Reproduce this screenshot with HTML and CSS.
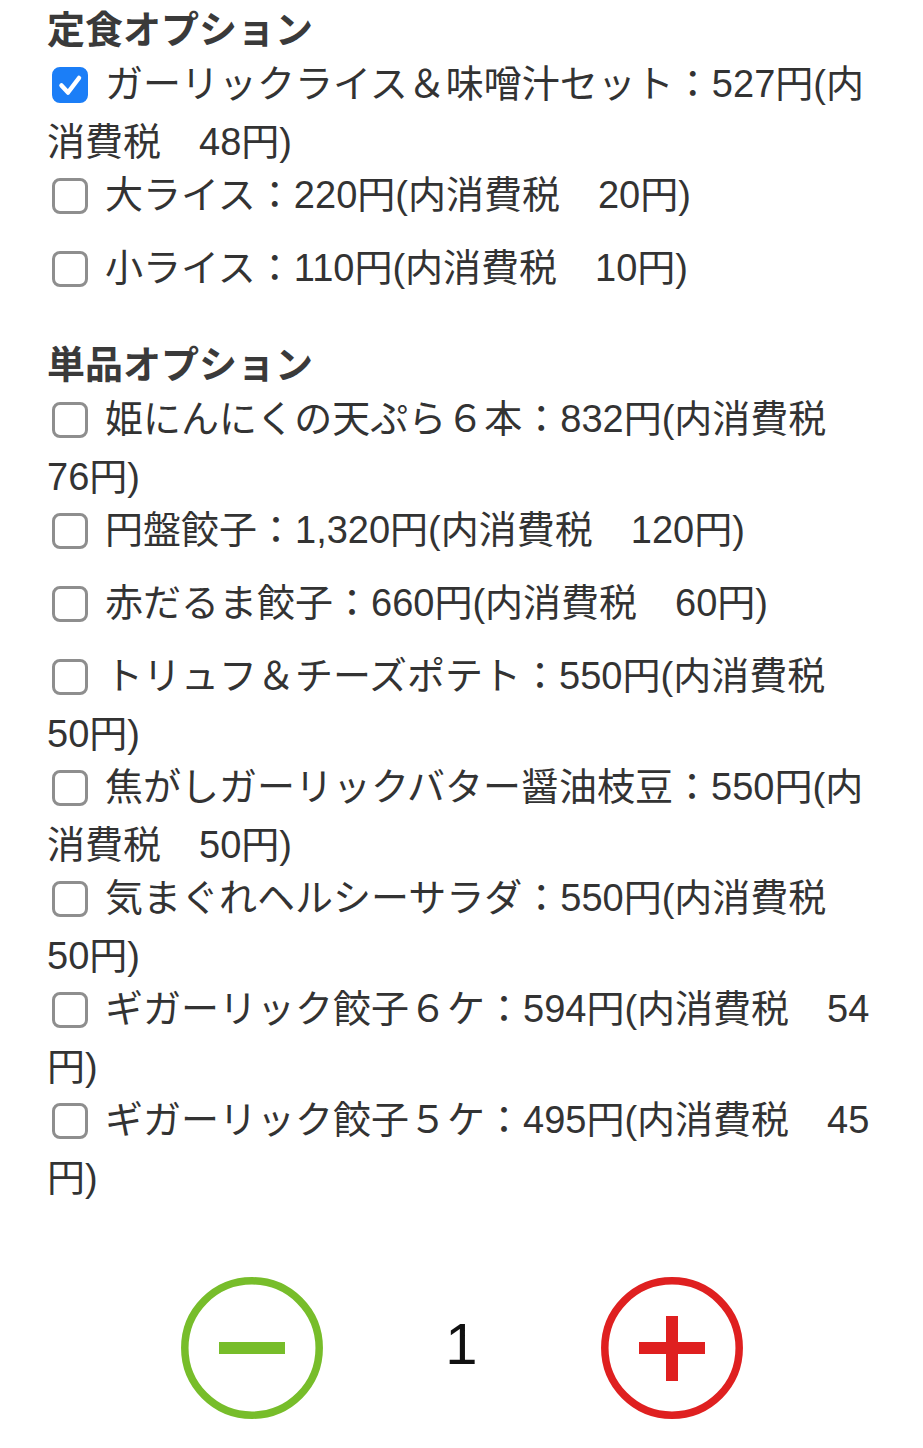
FILE: index.html
```html
<!DOCTYPE html>
<html lang="ja">
<head>
  <meta charset="utf-8">
  <meta name="viewport" content="width=device-width, initial-scale=1.0">
  <title>オプション選択</title>
  <link rel="stylesheet" href="styles.css">
</head>
<body>
  <div class="order">
    <section class="group">
      <h2 class="group-title">定食オプション</h2>
      <label class="opt"><input type="checkbox" checked><span class="box"><svg viewBox="0 0 36 36"><path d="M9.5 18.5 L16 25.5 L27 11" /></svg></span>ガーリックライス＆味噌汁セット：527円(内消費税　48円)</label>
      <label class="opt"><input type="checkbox"><span class="box"></span>大ライス：220円(内消費税　20円)</label>
      <label class="opt"><input type="checkbox"><span class="box"></span>小ライス：110円(内消費税　10円)</label>
    </section>

    <section class="group">
      <h2 class="group-title">単品オプション</h2>
      <label class="opt"><input type="checkbox"><span class="box"></span>姫にんにくの天ぷら６本：832円(内消費税　76円)</label>
      <label class="opt"><input type="checkbox"><span class="box"></span>円盤餃子：1,320円(内消費税　120円)</label>
      <label class="opt"><input type="checkbox"><span class="box"></span>赤だるま餃子：660円(内消費税　60円)</label>
      <label class="opt"><input type="checkbox"><span class="box"></span>トリュフ＆チーズポテト：550円(内消費税　50円)</label>
      <label class="opt"><input type="checkbox"><span class="box"></span>焦がしガーリックバター醤油枝豆：550円(内消費税　50円)</label>
      <label class="opt"><input type="checkbox"><span class="box"></span>気まぐれヘルシーサラダ：550円(内消費税　50円)</label>
      <label class="opt"><input type="checkbox"><span class="box"></span>ギガーリック餃子６ケ：594円(内消費税　54円)</label>
      <label class="opt"><input type="checkbox"><span class="box"></span>ギガーリック餃子５ケ：495円(内消費税　45円)</label>
    </section>

    <div class="qty">
      <button class="qty-btn minus" type="button" aria-label="減らす">
        <svg viewBox="0 0 142 142">
          <circle cx="71" cy="71" r="67.2" />
          <rect x="38" y="65" width="66" height="12" />
        </svg>
      </button>
      <div class="qty-num">1</div>
      <button class="qty-btn plus" type="button" aria-label="増やす">
        <svg viewBox="0 0 142 142">
          <circle cx="71" cy="71" r="67.2" />
          <rect x="38" y="65" width="66" height="12" />
          <rect x="65" y="39" width="12" height="65" />
        </svg>
      </button>
    </div>
  </div>
</body>
</html>
```

FILE: styles.css
```css
html, body {
  margin: 0;
  background: #fff;
}
body {
  font-family: "Liberation Sans", "Noto Sans CJK JP", sans-serif;
  color: #333;
}

.order {
  padding: 11px 47px 0;
}

/* the last row's 15px margin collapses into this one */
.group + .group {
  margin-top: 39px;
}

.group-title {
  margin: 0 0 16px;
  font-size: 38px;
  line-height: 38px;
  font-weight: bold;
  color: #3a3a3a;
}

/* one option row, wraps back under the box */
.opt {
  display: block;
  margin-bottom: 15px;
  font-size: 38px;
  line-height: 38px;
}

.opt input {
  display: none;
}

.opt .box {
  display: inline-block;
  vertical-align: top;
  box-sizing: border-box;
  width: 36px;
  height: 36px;
  margin: 2px 17px 20px 5px;
  border: 3px solid #8e8e8e;
  border-radius: 8px;
  background: #fff;
}

.opt input:checked + .box {
  border-color: #1b7ef7;
  background: #1b7ef7;
}

.opt .box svg {
  display: block;
  width: 36px;
  height: 36px;
  margin: -3px;
}

.opt .box path {
  fill: none;
  stroke: #fff;
  stroke-width: 4.5;
  stroke-linecap: round;
  stroke-linejoin: round;
}

.qty {
  display: grid;
  grid-template-columns: 142px 140px 142px;
  column-gap: 69px;
  justify-content: center;
  align-items: center;
  margin-top: 80px;
}

.qty-btn {
  display: block;
  width: 142px;
  height: 142px;
  padding: 0;
  border: 0;
  background: none;
}

.qty-btn svg {
  display: block;
  width: 142px;
  height: 142px;
}

.qty-btn circle {
  fill: none;
  stroke-width: 7.5;
}

.minus circle { stroke: #77bd2a; }
.minus rect { fill: #77bd2a; }
.plus circle { stroke: #df2020; }
.plus rect { fill: #df2020; }

.qty-num {
  padding-bottom: 10px;
  text-align: center;
  font-size: 58px;
  color: #111;
}
```
